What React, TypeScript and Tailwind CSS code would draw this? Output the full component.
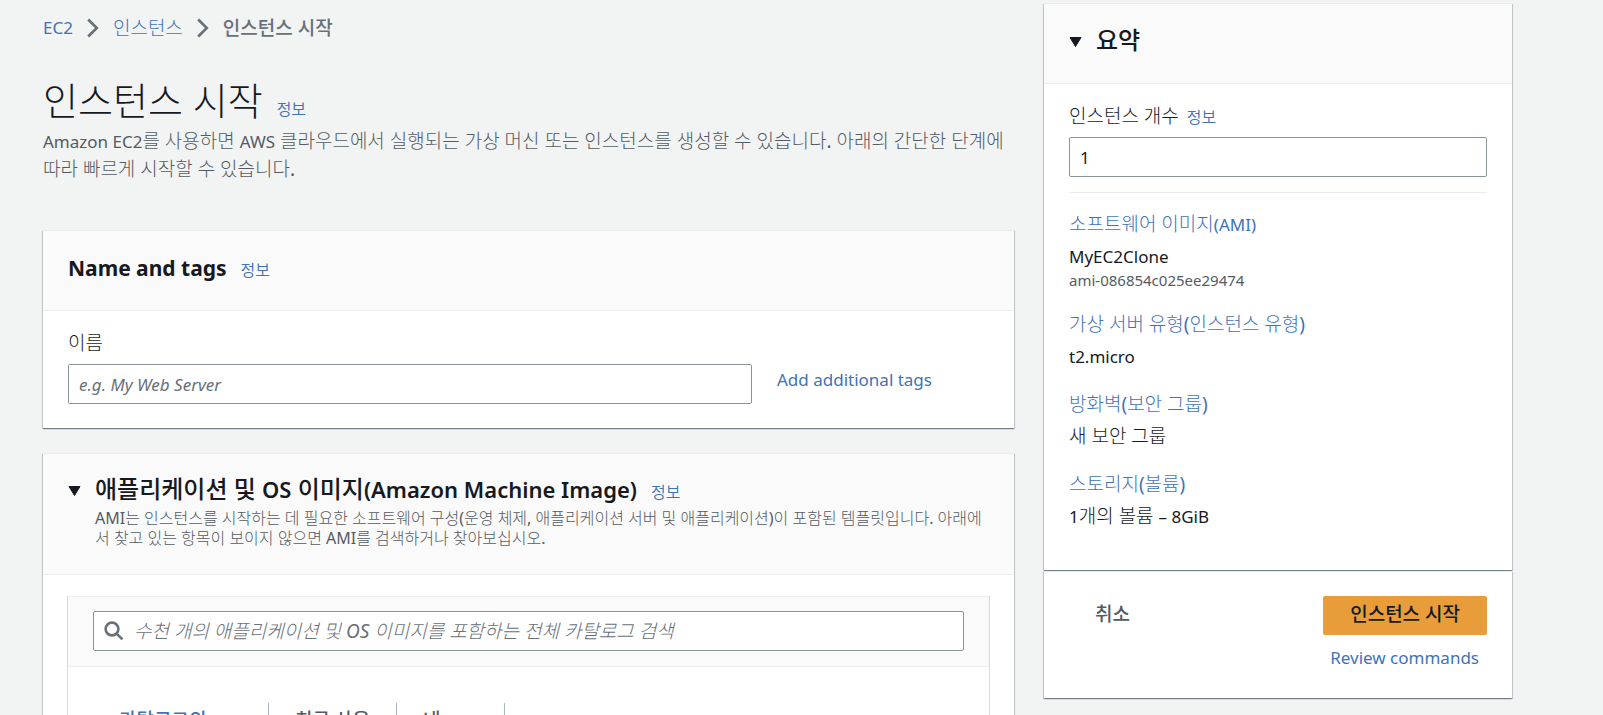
import type { ReactNode } from "react";

function InfoLink() {
  return (
    <a href="#info" className="font-['Noto_Sans','Noto_Sans_CJK_KR_DemiLight','Noto_Sans_CJK_KR',sans-serif] text-base leading-5 text-[#3f72b8]">
      정보
    </a>
  );
}

function Latin({ children }: { children: ReactNode }) {
  return <span className="text-[17px] leading-none">{children}</span>;
}

function ChevronIcon() {
  return (
    <svg width="12" height="20" viewBox="0 0 12 20" fill="none" stroke="#687078" strokeWidth="2.6" aria-hidden="true">
      <path d="M1.2 1.5L9.8 10L1.2 18.5" />
    </svg>
  );
}

function CaretIcon() {
  return (
    <svg width="13" height="13" viewBox="0 0 13 13" fill="#16191f" stroke="#16191f" strokeLinejoin="round" aria-hidden="true">
      <path d="M1 1.5H12L6.5 10.5Z" />
    </svg>
  );
}

function SearchIcon() {
  return (
    <svg width="20" height="20" viewBox="0 0 20 20" fill="none" stroke="#687078" strokeWidth="2.6" aria-hidden="true">
      <circle cx="8" cy="8" r="6.4" />
      <path d="M12.6 12.6L18.4 18.4" />
    </svg>
  );
}

const panel =
  "border-t border-[#eaeded] bg-white shadow-[0_1px_1px_0_rgba(0,28,36,0.35),1px_1px_1px_0_rgba(0,28,36,0.15),-1px_1px_1px_0_rgba(0,28,36,0.15)]";

const strong = "font-['Noto_Sans','Noto_Sans_CJK_KR',sans-serif] font-medium";

function SummaryItem({ title, children }: { title: ReactNode; children: ReactNode }) {
  return (
    <div>
      <dt>
        <a href="#section" className="block text-[19px] leading-7 text-[#3f72b8]">
          {title}
        </a>
      </dt>
      <dd className="mt-1 text-[19px] leading-7">{children}</dd>
    </div>
  );
}

function Tab({ active, children }: { active?: boolean; children: ReactNode }) {
  return (
    <button
      type="button"
      className={`flex items-start px-[26px] pt-[5px] text-left text-[19px] leading-6 ${strong} ${
        active ? "w-[175px] text-[#3f72b8]" : "border-l border-[#aab7b8] text-[#545b64]"
      }`}
    >
      <span>{children}</span>
    </button>
  );
}

export default function App() {
  return (
    <div className="h-screen overflow-hidden bg-[#f2f3f3] font-['Noto_Sans','Noto_Sans_CJK_KR_Light','Noto_Sans_CJK_KR',sans-serif] text-[#16191f]">
      <div className="flex items-start gap-[30px] pr-[91px] pl-[43px]">
        <main className="min-w-0 flex-1">
          <nav aria-label="탐색 경로" className="flex items-center gap-[14px] pt-[14px]">
            <a href="#ec2" className="text-[17px] leading-7 text-[#3f72b8]">EC2</a>
            <ChevronIcon />
            <a href="#instances" className="text-[19px] leading-7 text-[#3f72b8]">인스턴스</a>
            <ChevronIcon />
            <span className={`text-[19px] leading-7 text-[#687078] ${strong}`}>인스턴스 시작</span>
          </nav>
          <header className="pt-[33px]">
            <div className="flex items-baseline gap-[14px]">
              <h1 className="text-[38px] leading-[50px]">인스턴스 시작</h1>
              <InfoLink />
            </div>
            <p className="mt-[2px] text-[19px] leading-7 text-[#545b64]">
              <Latin>Amazon EC2</Latin>를 사용하면 <Latin>AWS</Latin> 클라우드에서 실행되는 가상 머신 또는 인스턴스를 생성할 수 있습니다. 아래의 간단한 단계에 따라 빠르게 시작할 수 있습니다.
            </p>
          </header>

          <section className={`mt-[47px] ${panel}`}>
            <div className="flex h-20 items-center border-b border-[#eaeded] bg-[#fafafa] px-[25px] pb-[6px]">
              <div className="flex items-baseline gap-[14px]">
                <h2 className="text-[21px] leading-7 font-bold">Name and tags</h2>
                <InfoLink />
              </div>
            </div>
            <div className="px-[25px] pt-[18px] pb-6">
              <label htmlFor="name" className="block text-[19px] leading-7">이름</label>
              <div className="mt-[7px] flex items-center gap-[25px]">
                <input
                  id="name"
                  placeholder="e.g. My Web Server"
                  className="h-10 w-[684px] rounded-xs border border-[#879596] bg-white px-[10px] text-[17px] placeholder:text-[#687078] placeholder:italic"
                />
                <a href="#tags" className="pb-2 text-[17px] leading-7 text-[#3f72b8]">Add additional tags</a>
              </div>
            </div>
          </section>

          <section className={`mt-[25px] ${panel}`}>
            <div className="border-b border-[#eaeded] bg-[#fafafa] px-[25px] pt-[19px] pb-[26px]">
              <div className="flex items-baseline gap-[14px]">
                <CaretIcon />
                <h2 className={`text-2xl leading-8 ${strong}`}>
                  애플리케이션 및 <span className="text-[22px] leading-none font-semibold">OS</span> 이미지
                  <span className="text-[22px] leading-none font-semibold">(Amazon Machine Image)</span>
                </h2>
                <InfoLink />
              </div>
              <p className="mt-[3px] pl-[27px] text-base leading-5 text-[#545b64]">
                AMI는 인스턴스를 시작하는 데 필요한 소프트웨어 구성(운영 체제, 애플리케이션 서버 및 애플리케이션)이 포함된 템플릿입니다. 아래에서 찾고 있는 항목이 보이지 않으면 AMI를 검색하거나 찾아보십시오.
              </p>
            </div>
            <div className="px-6 pt-[21px]">
              <div className="border border-[#d5dbdb] border-t-[#eaeded]">
                <div className="border-b border-[#eaeded] bg-[#fafafa] px-[25px] pt-[14px] pb-[15px]">
                  <label className="flex h-10 items-center gap-[10px] rounded-xs border border-[#879596] bg-white px-[10px]">
                    <SearchIcon />
                    <input
                      type="search"
                      aria-label="AMI 검색"
                      placeholder="수천 개의 애플리케이션 및 OS 이미지를 포함하는 전체 카탈로그 검색"
                      className="min-w-0 flex-1 bg-transparent text-[19px] outline-none placeholder:text-[#687078] placeholder:italic"
                    />
                  </label>
                </div>
                <div className="flex items-stretch px-[25px] pt-9 pb-6">
                  <Tab active>카탈로그의 AMI</Tab>
                  <Tab>최근 사용</Tab>
                  <Tab>내 <Latin>AMI</Latin></Tab>
                  <Tab><Latin>Quick Start</Latin></Tab>
                </div>
              </div>
            </div>
          </section>
        </main>

        <aside className="w-[468px] pt-[3px]">
          <section className={panel}>
            <div className="flex h-20 items-center border-b border-[#eaeded] bg-[#fafafa] px-[25px] pb-2">
              <div className="flex items-baseline gap-[14px]">
                <CaretIcon />
                <h2 className={`text-2xl leading-8 ${strong}`}>요약</h2>
              </div>
            </div>
            <div className="px-[25px] pt-[18px] pb-10">
              <div className="flex items-baseline gap-2">
                <label htmlFor="count" className="text-[19px] leading-7">인스턴스 개수</label>
                <InfoLink />
              </div>
              <input
                id="count"
                defaultValue="1"
                className="mt-[7px] h-10 w-full rounded-xs border border-[#879596] bg-white px-[10px] text-[17px]"
              />
              <dl className="mt-[15px] flex flex-col gap-5 border-t border-[#eaeded] pt-[17px]">
                <SummaryItem title={<>소프트웨어 이미지<Latin>(AMI)</Latin></>}>
                  <Latin>MyEC2Clone</Latin>
                  <small className="block text-[15px] leading-5 text-[#545b64]">ami-086854c025ee29474</small>
                </SummaryItem>
                <SummaryItem title="가상 서버 유형(인스턴스 유형)"><Latin>t2.micro</Latin></SummaryItem>
                <SummaryItem title="방화벽(보안 그룹)">새 보안 그룹</SummaryItem>
                <SummaryItem title="스토리지(볼륨)">
                  <Latin>1</Latin>개의 볼륨 <Latin>– 8GiB</Latin>
                </SummaryItem>
              </dl>
            </div>
          </section>
          <section className={`mt-px flex items-start justify-between px-[25px] pt-6 pb-[26px] ${panel}`}>
            <button type="button" className={`h-9 px-[26px] text-[19px] leading-7 text-[#545b64] ${strong}`}>취소</button>
            <div className="flex flex-col items-end gap-[9px]">
              <button type="button" className={`h-[39px] rounded-xs bg-[#e89c3a] px-[27px] pb-1 text-[19px] leading-7 ${strong}`}>
                인스턴스 시작
              </button>
              <a href="#commands" className="pr-2 text-[17px] leading-7 text-[#3f72b8]">Review commands</a>
            </div>
          </section>
        </aside>
      </div>
    </div>
  );
}
